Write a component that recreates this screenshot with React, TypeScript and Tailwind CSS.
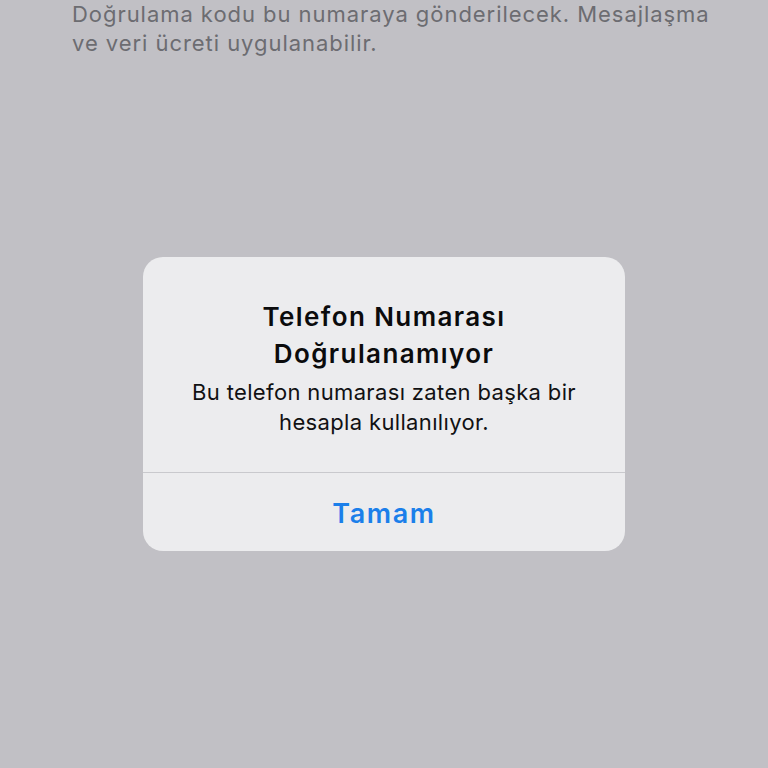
import React from 'react';

const font = { fontFamily: 'Inter, "Noto Sans", sans-serif' };

export default function App() {
  return (
    <div className="min-h-[768px] w-full bg-[#c1c0c5] flex flex-col" style={font}>
      {/* helper text left over from the phone-entry screen behind the alert */}
      <p className="pl-[72px] pr-[20px] text-[22px] leading-[29px] text-[#6c6c71] tracking-[0.95px] whitespace-nowrap">
        Doğrulama kodu bu numaraya gönderilecek. Mesajlaşma
        <br />
        ve veri ücreti uygulanabilir.
      </p>

      <div className="mx-auto mt-[199px] w-[482px] rounded-[20px] bg-[#ececee] flex flex-col">
        <div className="pt-[41px] pb-[35px] px-4 text-center">
          <h2 className="text-[26px] leading-[37px] font-semibold tracking-[1.4px] text-[#0b0b0c]">
            Telefon Numarası
            <br />
            Doğrulanamıyor
          </h2>
          <p className="mt-[5px] text-[22px] leading-[30px] tracking-[0.35px] text-[#111113]">
            Bu telefon numarası zaten başka bir
            <br />
            hesapla kullanılıyor.
          </p>
        </div>
        <div className="h-px bg-[#c9c9cd]" />
        <button className="h-[78px] pt-[4px] text-[27px] font-semibold tracking-[1.6px] text-[#1b7fea]">Tamam</button>
      </div>
    </div>
  );
}
